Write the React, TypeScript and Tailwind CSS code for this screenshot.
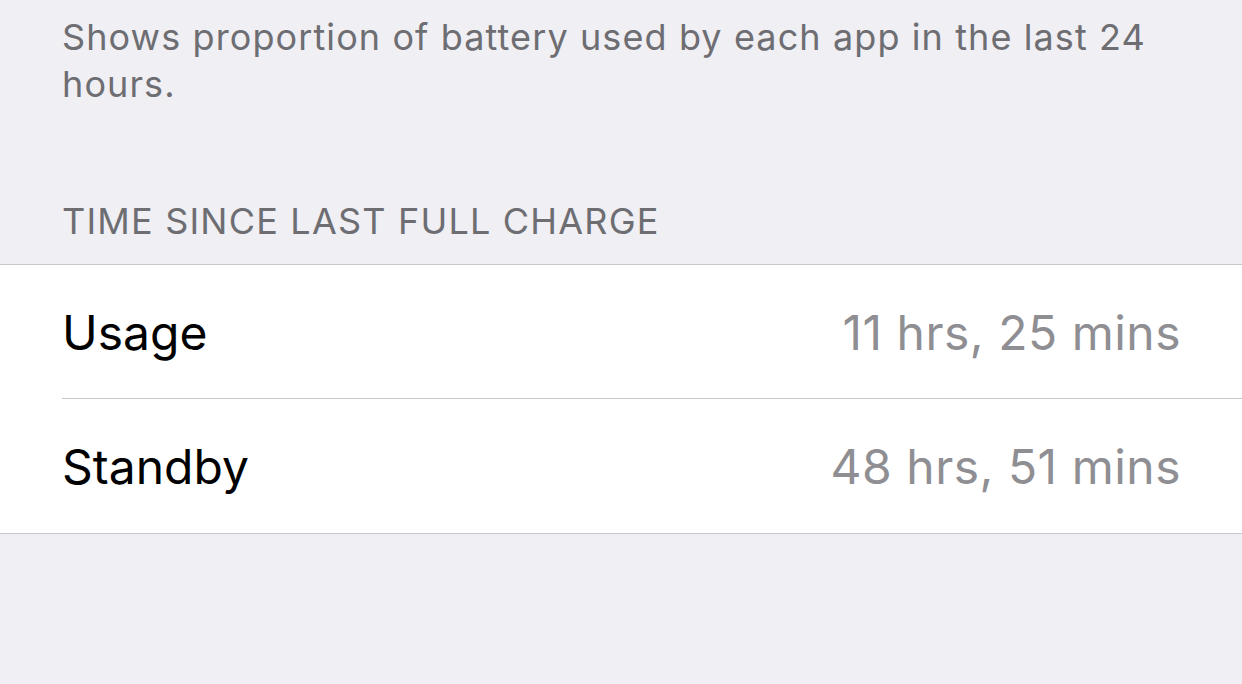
const rows = [
  { label: "Usage", value: "11 hrs, 25 mins" },
  { label: "Standby", value: "48 hrs, 51 mins" },
];

export default function App() {
  return (
    <div className="w-[1242px] h-[684px] overflow-hidden bg-[#efeff4] font-['Inter',sans-serif]">
      <p className="px-[62px] pt-[14px] text-[36px] leading-[47px] tracking-[1.1px] text-[#6d6d72]">
        Shows proportion of battery used by each app in the last 24 hours.
      </p>

      <div className="px-[62px] pt-[93px] pb-[23px] text-[36px] leading-[40px] tracking-[1.2px] text-[#6d6d72] uppercase">
        Time since last full charge
      </div>

      <div className="bg-white border-y border-[#c8c7cc]">
        {rows.map((row, i) => (
          <div key={row.label} className="pl-[62px]">
            <div
              className={
                "h-[134px] flex items-center justify-between pr-[61px] pt-[2px] " +
                (i < rows.length - 1 ? "border-b border-[#c8c7cc]" : "")
              }
            >
              <span className="text-[48px] text-black">{row.label}</span>
              <span className="text-[48px] tracking-[0.5px] text-[#8e8e93]">{row.value}</span>
            </div>
          </div>
        ))}
      </div>
    </div>
  );
}
